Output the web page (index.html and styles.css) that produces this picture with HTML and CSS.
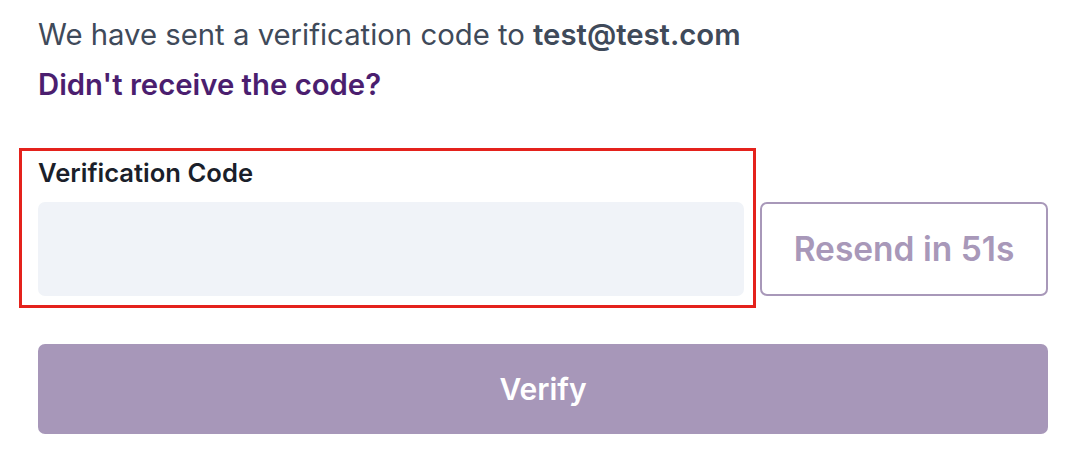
FILE: index.html
```html
<!DOCTYPE html>
<html lang="en">
<head>
  <meta charset="utf-8">
  <title>Verify your email</title>
  <link rel="stylesheet" href="styles.css">
</head>
<body>
  <div class="verify">
    <p class="sent">We have sent a verification code to <b>test@test.com</b></p>
    <a class="resend-link" href="#">Didn't receive the code?</a>
    <div class="code-row">
      <div class="field">
        <label for="code">Verification Code</label>
        <input type="text" id="code" name="code">
      </div>
      <button class="resend" disabled>Resend in 51s</button>
    </div>
    <button class="submit" disabled>Verify</button>
  </div>
</body>
</html>
```
FILE: styles.css
```css
body {
  margin: 0;
  font-family: Inter, "Noto Sans", sans-serif;
  background: #fff;
}
.verify {
  display: flex;
  flex-direction: column;
  padding: 13px 30px 0 38px;
}
.sent {
  margin: 0;
  font-size: 29.3px;
  line-height: 44px;
  color: #3f4a5a;
}
.sent b {
  font-weight: 600;
}
.resend-link {
  margin-top: 6px;
  font-size: 29.3px;
  line-height: 44px;
  font-weight: 600;
  color: #4b1e6f;
  text-decoration: none;
}
.code-row {
  display: flex;
  align-items: flex-end;
  gap: 4px;
  margin: 41px 0 0 -19px;
}
.field {
  display: flex;
  flex-direction: column;
  width: 706px;
  padding: 5px 9px 9px 16px;
  border: 3px solid #e4221c;
}
.field label {
  font-size: 25.6px;
  line-height: 34px;
  font-weight: 600;
  color: #1b1f2a;
  margin-bottom: 12px;
}
.field input {
  height: 94px;
  border: none;
  border-radius: 7px;
  background: #f0f3f8;
  padding: 0 16px;
  box-sizing: border-box;
  font-size: 28px;
}
.resend {
  width: 288px;
  height: 94px;
  margin-bottom: 12px;
  border: 2px solid #a898b9;
  border-radius: 7px;
  background: #fff;
  color: #a898b9;
  font-family: inherit;
  font-size: 33.5px;
  font-weight: 600;
}
.submit {
  margin-top: 36px;
  width: 1010px;
  height: 90px;
  border: none;
  border-radius: 7px;
  background: #a797b9;
  color: #fff;
  font-family: inherit;
  font-size: 30px;
  font-weight: 600;
}
```
